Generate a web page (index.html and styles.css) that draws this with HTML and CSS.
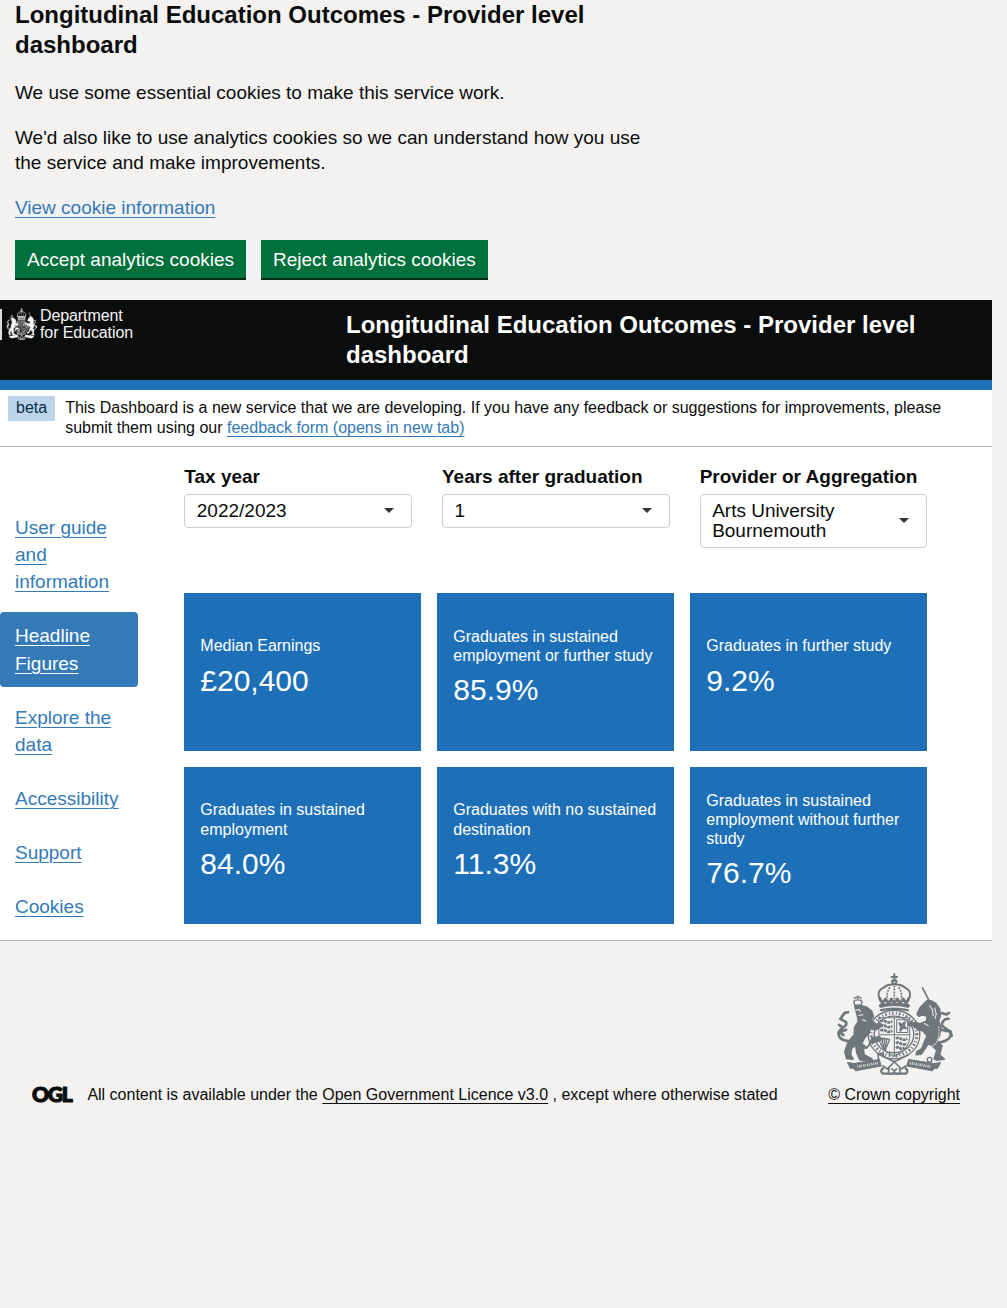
FILE: index.html
```html
<!DOCTYPE html>
<html lang="en">
<head>
<meta charset="utf-8">
<title>Longitudinal Education Outcomes - Provider level dashboard</title>
<link rel="stylesheet" href="styles.css">
</head>
<body>
<svg class="defs" width="0" height="0" aria-hidden="true">
  <symbol id="crest" viewBox="34 22 352 310" preserveAspectRatio="none">
    <g fill="none" stroke="currentColor" stroke-linecap="round" stroke-linejoin="round">
      <!-- crown -->
      <path stroke-width="6" d="M211 26v20M203 34h16M204 46q7-6 14 0l-3 9h-8z"/>
      <path stroke-width="6" d="M207 57q-16-1-28 9-16 7-15 22 1 8 5 17M215 57q16-1 28 9 16 7 15 22-1 8-5 17"/>
      <path stroke-width="5" stroke-linecap="butt" stroke-dasharray="6 3" d="M198 65q-12 18-7 36M224 65q12 18 7 36M211 60v40"/>
      <path stroke-width="8" d="M168 98l7 16 9-14 10 13 8-13 9 12 9-12 8 13 10-13 9 14 7-16"/>
      <path stroke-width="11" d="M170 121q41-10 82 0"/>
      <path stroke-width="7" d="M171 134q40-9 80 0"/>
      <!-- garter -->
      <ellipse cx="210" cy="207" rx="77" ry="73" stroke-width="4"/>
      <ellipse cx="210" cy="207" rx="68" ry="64" stroke-width="9" stroke-linecap="butt" stroke-dasharray="3 6 5 7"/>
      <ellipse cx="210" cy="207" rx="59" ry="55" stroke-width="4"/>
      <!-- quartered shield -->
      <path stroke-width="3" d="M165 157h92v55q0 38-46 61-46-23-46-61zM211 157v116M165 208h92"/>
      <path stroke-width="8" stroke-linecap="butt" stroke-dasharray="9 2" d="M170 168q8-6 15 0t20 0M170 182q8-6 15 0t20 0M170 196q8-6 15 0t20 0"/>
      <path stroke-width="3" d="M218 163h33v38h-33z"/>
      <path stroke-width="6" d="M226 173l8 6 8-9-3 13 7 5-10-2-7 10 2-12z"/>
      <path stroke-width="4" d="M177 218l20 4-13 31-10-16zM182 222l-2 20M188 223l-4 24"/>
      <path stroke-width="8" stroke-linecap="butt" stroke-dasharray="9 2" d="M216 220q7-6 14 0t20 0M216 234q7-6 14 0t18 0M216 248q7-6 12 0t13-2"/>
      <!-- lion -->
      <path stroke-width="4" d="M90 107q12-8 25 0l-3 12H93zM92 98q10-8 20 0M102 91v8"/>
      <path fill="currentColor" stroke-width="6" d="M94 123l12-3 20 4 17 13 5 17-7 9 14 15 14-4 4 7-16 11-19-7-2 17-15 16-8 17 14 11-10 5 4 18 23 12-3 6-32-4-9-20-4-25-13 10-3 20 7 13-18-2-5-21 10-28 18-22 1-22 11-18-2-14z"/>
      <path stroke-width="8" d="M74 227q-16-1-25-10-12-18 8-30 15-9 9-18l-16-9M50 160l13-18 10-2M67 193l-19 7 11 9M46 178l12 8"/>
      <path fill="currentColor" stroke-width="5" d="M143 218l23-4 9 7-8 5-25 6-14 16"/>
      <path class="crest-cut" stroke-width="3" d="M96 134l10-2 4 7M105 150l12-2M116 163l10 3"/>
      <!-- unicorn -->
      <path stroke-width="5" d="M295 67l20 39"/>
      <path fill="currentColor" stroke-width="5" d="M309 105l12 1 13 7 12 17 2 20-5 17 7 19-4 24-10 15 17 17-7 26 14 13-23 3-7-4 8-27-25-20-9 15-13 18-15 2 3-10 14-8 8-22 8-16-12-16-14-3-15-12-15-2 2-8 20 1 14 3 18-8 2-16-16-3-8 4-6-6 9-20z"/>
      <path class="crest-cut" stroke-width="3" d="M316 120l9 13 2 18M331 127l5 18-3 14M301 174l12 7"/>
      <path stroke-width="8" d="M339 232q28-3 37-16 9-16-10-26-19-9-10-22 7-10 17-8M374 142l-8 5-12-4M382 211l-4-14M350 193l19 4"/>
      <path class="crest-cut" stroke-width="3" stroke-linecap="butt" stroke-dasharray="5 4" d="M343 183q7 43-19 60l-8 25"/>
      <circle cx="316" cy="283" r="7" stroke-width="4"/>
      <!-- motto scroll and supporters' base -->
      <path fill="currentColor" stroke-width="3" d="M71 291l20 3 75-12 6 20-76 14-7-8-9 1zM349 291l-20 3-75-12-6 20 76 14 7-8 9 1z"/>
      <path class="crest-cut" stroke-width="8" stroke-linecap="butt" stroke-dasharray="2 4 3 3" d="M101 304l62-11M257 293l62 11"/>
      <path stroke-width="5" d="M166 267l45 22 42-21M164 283l-2-18 15-2 2 11M211 289l-21 22-13-9M211 289l21 22 13-9M196 311q-8 18 7 15 16-6 1-15M226 311q8 18-7 15-16-6-1-15"/>
      <path stroke-width="7" d="M177 309q-11 10 1 16h67q10-7 0-16"/>
    </g>
  </symbol>
</svg>

<section class="cookie-banner" aria-label="Cookies">
  <h2 class="cookie-title">Longitudinal Education Outcomes - Provider level dashboard</h2>
  <p>We use some essential cookies to make this service work.</p>
  <p>We'd also like to use analytics cookies so we can understand how you use the service and make improvements.</p>
  <p><a class="link" href="#">View cookie information</a></p>
  <div class="button-group">
    <button class="button" type="button">Accept analytics cookies</button>
    <button class="button" type="button">Reject analytics cookies</button>
  </div>
</section>

<div class="page">
  <header class="header">
    <div class="brand">
      <svg class="brand-crest"><use href="#crest"/></svg>
      <span class="brand-name">Department<br>for Education</span>
    </div>
    <h1 class="header-title">Longitudinal Education Outcomes - Provider level dashboard</h1>
  </header>

  <div class="phase-banner">
    <strong class="tag">beta</strong>
    <span class="phase-text">This Dashboard is a new service that we are developing. If you have any feedback or suggestions for improvements, please submit them using our <a class="link" href="#">feedback form (opens in new tab)</a></span>
  </div>

  <div class="layout">
    <nav class="sidebar">
      <a class="nav-item" href="#">User guide and information</a>
      <a class="nav-item nav-item-active" href="#">Headline Figures</a>
      <a class="nav-item" href="#">Explore the data</a>
      <a class="nav-item" href="#">Accessibility</a>
      <a class="nav-item" href="#">Support</a>
      <a class="nav-item" href="#">Cookies</a>
    </nav>
    <main class="content">
      <div class="filters">
        <div class="filter"><span class="filter-label">Tax year</span><div class="select"><span>2022/2023</span><i class="caret"></i></div></div>
        <div class="filter"><span class="filter-label">Years after graduation</span><div class="select"><span>1</span><i class="caret"></i></div></div>
        <div class="filter"><span class="filter-label">Provider or Aggregation</span><div class="select"><span>Arts University Bournemouth</span><i class="caret"></i></div></div>
      </div>
      <div class="cards">
        <div class="card"><p class="card-label">Median Earnings</p><p class="card-value">£20,400</p></div>
        <div class="card"><p class="card-label">Graduates in sustained employment or further study</p><p class="card-value">85.9%</p></div>
        <div class="card"><p class="card-label">Graduates in further study</p><p class="card-value">9.2%</p></div>
        <div class="card"><p class="card-label">Graduates in sustained employment</p><p class="card-value">84.0%</p></div>
        <div class="card"><p class="card-label">Graduates with no sustained destination</p><p class="card-value">11.3%</p></div>
        <div class="card"><p class="card-label">Graduates in sustained employment without further study</p><p class="card-value">76.7%</p></div>
      </div>
    </main>
  </div>

  <footer class="footer">
    <span class="ogl">OGL</span>
    <span class="licence">All content is available under the <a href="#">Open Government Licence v3.0</a> , except where otherwise stated</span>
    <div class="copyright">
      <svg class="footer-crest"><use href="#crest"/></svg>
      <a href="#">© Crown copyright</a>
    </div>
  </footer>
</div>
</body>
</html>
```
FILE: styles.css
```css
* { box-sizing: border-box; }

body {
  margin: 0;
  background: #f3f2f1;
  color: #0b0c0c;
  font: 19px/25px "Liberation Sans", Arial, sans-serif;
}

h1, h2, p { margin: 0; }

a {
  color: inherit;
  text-decoration: underline;
  text-decoration-thickness: 1px;
  text-underline-offset: 0.1578em;
}

.defs { display: block; position: absolute; }
.link { color: #337ab7; }

/* Cookie banner */
.cookie-banner {
  width: 675px;
  height: 300px;
  padding: 0 15px;
}
.cookie-title { font-size: 24px; line-height: 30px; }
.cookie-banner p { margin-top: 20px; }
.button-group { display: flex; gap: 15px; margin-top: 20px; }
.button {
  height: 38px;
  padding: 0 12px;
  border: 0;
  background: #00703c;
  box-shadow: 0 2px 0 #002d18;
  color: #fff;
  font: 19px/19px "Liberation Sans", Arial, sans-serif;
}

.page { width: 992px; }

/* Header */
.header {
  display: flex;
  height: 90px;
  padding-top: 9px;
  background: #0b0c0c;
  border-bottom: 10px solid #1d70b8;
  color: #fff;
}
.brand {
  display: flex;
  width: 346px;
  height: 31px;
  border-left: 2px solid #dcdcdc;
}
.brand-crest {
  width: 31px;
  height: 32px;
  margin: -1px 3px 0 4px;
  color: #f4f4f4;
}
.brand-name {
  margin-top: -2px;
  color: #f4f4f4;
  font-size: 16px;
  letter-spacing: -0.1px;
  line-height: 17px;
}
.header-title { width: 600px; margin-top: 1px; font-size: 24px; line-height: 30px; }

.crest-cut { stroke: #f3f2f1; }

/* Phase banner */
.phase-banner {
  display: flex;
  height: 57px;
  padding: 6px 8px 0;
  background: #fff;
  border-bottom: 1px solid #b1b4b6;
  font-size: 16px;
  line-height: 20px;
}
.tag {
  height: 25px;
  padding: 2px 8px 3px;
  margin-right: 10px;
  background: #bbd4ea;
  color: #0c2d4a;
  font-weight: 400;
}
.phase-text { flex: 1; padding-top: 2px; }

/* Main area */
.layout {
  display: flex;
  height: 493px;
  background: #fff;
}
.sidebar {
  display: flex;
  flex-direction: column;
  gap: 7px;
  width: 138px;
  padding-top: 57px;
  margin-right: 46.3px;
}
.nav-item {
  padding: 10px 15px;
  border-radius: 4px;
  color: #337ab7;
  line-height: 27.14px;
}
.nav-item-active { background: #337ab7; color: #fff; }

.content { width: 743px; padding-top: 17px; }
.filters {
  display: grid;
  grid-template-columns: repeat(3, 1fr);
  gap: 30px;
  height: 129px;
}
.filter-label { display: block; margin-bottom: 5px; font-weight: 700; white-space: nowrap; }
.select {
  display: flex;
  align-items: center;
  justify-content: space-between;
  min-height: 34px;
  padding: 6px 17px 6px 11.5px;
  border: 1px solid #ccc;
  border-radius: 4px;
  line-height: 20px;
}
.select span { max-width: 150px; }
.caret {
  margin-bottom: 2px;
  border: 5px solid transparent;
  border-top-color: #333;
  border-bottom: 0;
}

.cards {
  display: grid;
  grid-template-columns: repeat(3, 237px);
  grid-template-rows: 158px 157px;
  gap: 16px;
}
.card {
  display: flex;
  flex-direction: column;
  justify-content: center;
  padding: 1px 16px 0;
  background: #1d70b8;
  color: #fff;
}
.card-label { font-size: 16px; line-height: 19.2px; }
.card-value { margin: 7px 0 10px; font-size: 30px; line-height: 36px; }

/* Footer */
.footer {
  display: flex;
  align-items: flex-end;
  height: 165px;
  padding: 0 32px;
  border-top: 1px solid #b1b4b6;
  font-size: 16px;
  line-height: 20px;
}
.ogl {
  width: 55.4px;
  font-family: Lato, sans-serif;
  font-size: 21px;
  font-weight: 900;
  letter-spacing: -1.2px;
  line-height: 22px;
  -webkit-text-stroke: 1.2px #0b0c0c;
}
.licence { flex: 1; }
.copyright { display: flex; flex-direction: column; align-items: center; }
.footer-crest { width: 118px; height: 103px; margin-bottom: 9px; color: #6f777b; }
```
